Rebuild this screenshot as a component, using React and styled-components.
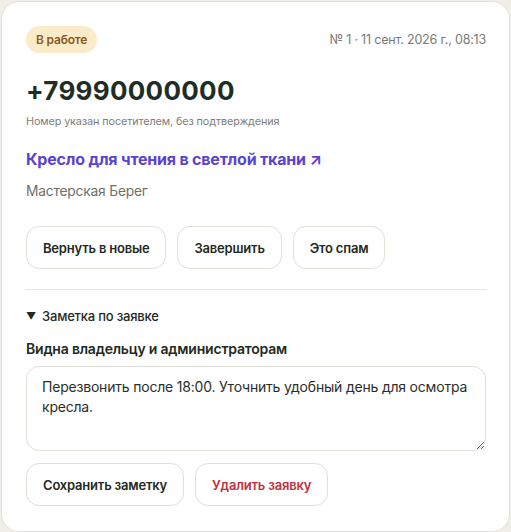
import React from "react";
import styled, { createGlobalStyle } from "styled-components";

const Global = createGlobalStyle`
  html, body { margin: 0; padding: 0; background: #efeee8; }
  body { font-family: Inter, "Noto Sans", sans-serif; color: #1f2a22; }
  * { box-sizing: border-box; }
`;

const Card = styled.div`
  margin: 1px 1px 0 1px;
  width: 509px;
  background: #ffffff;
  border: 1px solid #e3e1d9;
  border-radius: 18px;
  padding: 24px 23px 25px 24px;
  display: flex;
  flex-direction: column;
`;

const TopRow = styled.div`
  display: flex;
  justify-content: space-between;
  align-items: center;
`;

const Badge = styled.span`
  display: inline-flex;
  align-items: center;
  height: 27px;
  padding: 0 10px;
  border-radius: 14px;
  background: #fcebc9;
  color: #8a5a17;
  font-size: 12px;
  font-weight: 600;
  letter-spacing: -0.2px;
`;

const Meta = styled.span`
  font-size: 12.5px;
  color: #7a7a74;
  letter-spacing: -0.2px;
`;

const Phone = styled.div`
  margin-top: 22px;
  font-size: 26px;
  font-weight: 700;
  color: #1f2d24;
  letter-spacing: 0.3px;
  line-height: 32px;
`;

const Caption = styled.div`
  margin-top: 8px;
  font-size: 10.8px;
  color: #7d7d77;
  letter-spacing: -0.1px;
`;

const Link = styled.a`
  margin-top: 21px;
  font-size: 16px;
  font-weight: 700;
  color: #5a43cf;
  text-decoration: none;
  letter-spacing: -0.2px;
`;

const Workshop = styled.div`
  margin-top: 14px;
  font-size: 13.8px;
  color: #6f6f69;
  letter-spacing: -0.2px;
`;

const ButtonRow = styled.div`
  display: flex;
  gap: 11px;
  margin-top: ${p => p.$mt || 0}px;
`;

const Button = styled.button`
  height: 43px;
  padding: 0 16px;
  border: 1px solid #e1dfd8;
  border-radius: 13px;
  background: #fff;
  font-family: inherit;
  font-size: 13px;
  font-weight: 600;
  color: ${p => (p.$danger ? "#c0313f" : "#1f2a22")};
  letter-spacing: -0.2px;
`;

const Divider = styled.hr`
  border: 0;
  border-top: 1px solid #e6e4de;
  margin: 20px 0 0;
`;

const Details = styled.details`
  margin-top: 18px;
  display: flex;
  flex-direction: column;
`;

const Summary = styled.summary`
  font-size: 13px;
  font-weight: 500;
  color: #1f2a22;
  list-style: none;
  display: flex;
  align-items: center;
  gap: 6px;
  letter-spacing: -0.2px;
  &::-webkit-details-marker { display: none; }
`;

const Tri = styled.span`
  font-size: 10px;
`;

const Label = styled.label`
  display: block;
  margin-top: 16px;
  font-size: 14px;
  font-weight: 600;
  color: #1f2a22;
  letter-spacing: -0.2px;
`;

const TextArea = styled.textarea`
  display: block;
  margin-top: 9px;
  width: 100%;
  height: 85px;
  padding: 10px 15px;
  border: 1px solid #e1dfd8;
  border-radius: 13px;
  font-family: inherit;
  font-size: 14px;
  line-height: 20px;
  color: #2a2f2b;
  letter-spacing: -0.2px;
  resize: vertical;
  outline: none;
`;

export default function App() {
  return (
    <>
      <Global />
      <Card>
        <TopRow>
          <Badge>В работе</Badge>
          <Meta>№ 1 · 11 сент. 2026 г., 08:13</Meta>
        </TopRow>
        <Phone>+79990000000</Phone>
        <Caption>Номер указан посетителем, без подтверждения</Caption>
        <Link href="#">Кресло для чтения в светлой ткани ↗</Link>
        <Workshop>Мастерская Берег</Workshop>
        <ButtonRow $mt={27}>
          <Button>Вернуть в новые</Button>
          <Button>Завершить</Button>
          <Button>Это спам</Button>
        </ButtonRow>
        <Divider />
        <Details open>
          <Summary><Tri>▼</Tri>Заметка по заявке</Summary>
          <Label>Видна владельцу и администраторам</Label>
          <TextArea defaultValue="Перезвонить после 18:00. Уточнить удобный день для осмотра кресла." />
          <ButtonRow $mt={12}>
            <Button>Сохранить заметку</Button>
            <Button $danger>Удалить заявку</Button>
          </ButtonRow>
        </Details>
      </Card>
    </>
  );
}
